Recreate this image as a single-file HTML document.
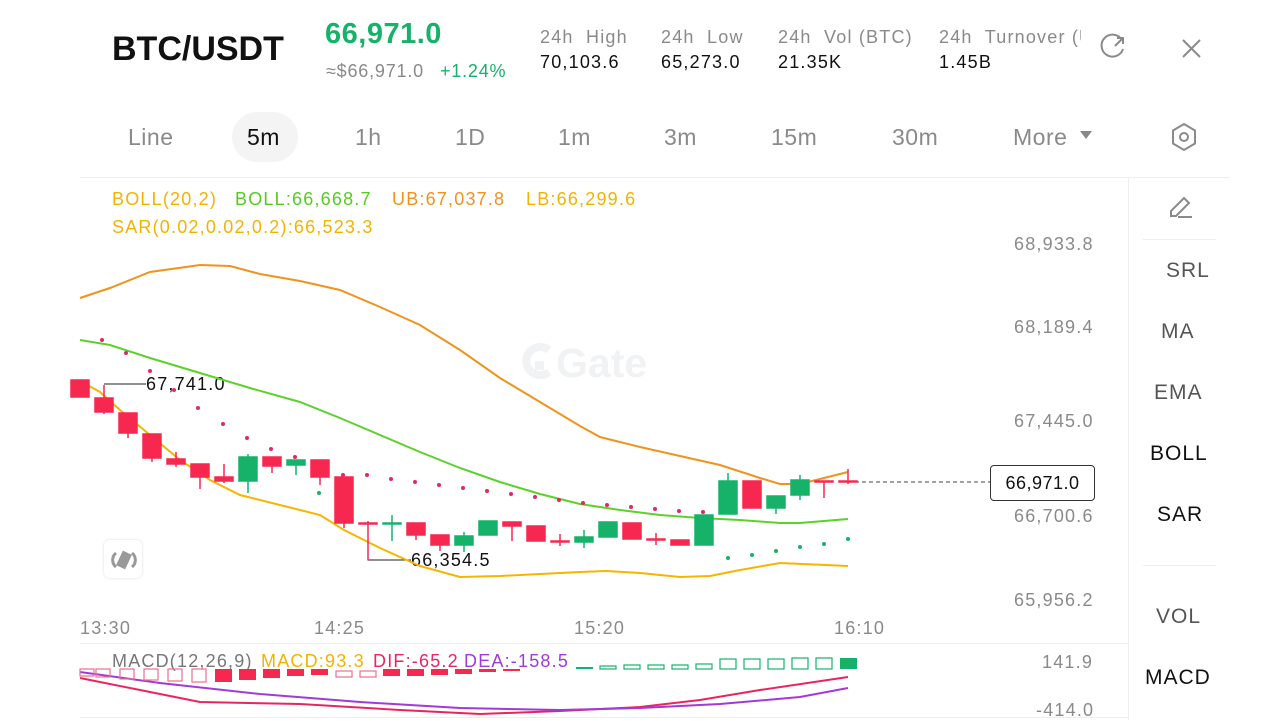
<!DOCTYPE html>
<html><head><meta charset="utf-8"><style>
body{margin:0;width:1280px;height:720px;background:#fff;font-family:"Liberation Sans",sans-serif;position:relative;overflow:hidden}
.a{position:absolute;white-space:nowrap}
.g{color:#8a8a8a}
.s{font-size:18px;letter-spacing:1.2px}
.t{font-size:23px;letter-spacing:0.5px}
.sb{font-size:21px;letter-spacing:1px}
</style></head><body>
<div class="a" style="left:112px;top:30px;font-size:34px;font-weight:bold;color:#111">BTC/USDT</div>
<div class="a" style="left:325px;top:18px;font-size:29px;font-weight:bold;color:#17b26a;letter-spacing:0.5px">66,971.0</div>
<div class="a g" style="left:326px;top:61px;font-size:18px;letter-spacing:0.8px">≈$66,971.0</div>
<div class="a" style="left:440px;top:61px;font-size:18px;letter-spacing:0.8px;color:#17b26a">+1.24%</div>
<div class="a g s" style="left:540px;top:27px">24h&nbsp; High</div>
<div class="a s" style="left:540px;top:52px;color:#111">70,103.6</div>
<div class="a g s" style="left:661px;top:27px">24h&nbsp; Low</div>
<div class="a s" style="left:661px;top:52px;color:#111">65,273.0</div>
<div class="a g s" style="left:778px;top:27px">24h&nbsp; Vol (BTC)</div>
<div class="a s" style="left:778px;top:52px;color:#111">21.35K</div>
<div class="a g s" style="left:939px;top:27px;width:142px;overflow:hidden">24h&nbsp; Turnover (USDT)</div>
<div class="a s" style="left:939px;top:52px;color:#111">1.45B</div>
<div class="a" style="left:232px;top:112px;width:66px;height:50px;border-radius:25px;background:#f4f4f4"></div>
<div class="a g t" style="left:128px;top:124px">Line</div>
<div class="a t" style="left:247px;top:124px;color:#111">5m</div>
<div class="a g t" style="left:355px;top:124px">1h</div>
<div class="a g t" style="left:455px;top:124px">1D</div>
<div class="a g t" style="left:558px;top:124px">1m</div>
<div class="a g t" style="left:664px;top:124px">3m</div>
<div class="a g t" style="left:771px;top:124px">15m</div>
<div class="a g t" style="left:892px;top:124px">30m</div>
<div class="a g t" style="left:1013px;top:124px">More</div>
<div class="a" style="left:80px;top:177px;width:1150px;height:1px;background:#eee"></div>
<div class="a" style="left:1128px;top:177px;width:1px;height:543px;background:#eee"></div>
<div class="a" style="left:1143px;top:239px;width:73px;height:1px;background:#eee"></div>
<div class="a" style="left:1143px;top:565px;width:73px;height:1px;background:#eee"></div>
<div class="a" style="left:80px;top:643px;width:1048px;height:1px;background:#eee"></div>
<div class="a" style="left:80px;top:717px;width:1048px;height:1px;background:#eee"></div>
<div class="a sb" style="left:1166px;top:259px;color:#555">SRL</div>
<div class="a sb" style="left:1161px;top:320px;color:#555">MA</div>
<div class="a sb" style="left:1154px;top:381px;color:#555">EMA</div>
<div class="a sb" style="left:1150px;top:442px;color:#111">BOLL</div>
<div class="a sb" style="left:1157px;top:503px;color:#111">SAR</div>
<div class="a sb" style="left:1156px;top:605px;color:#555">VOL</div>
<div class="a sb" style="left:1145px;top:666px;color:#111">MACD</div>
<div class="a s" style="left:112px;top:189px;color:#f2b300">BOLL(20,2)</div>
<div class="a s" style="left:235px;top:189px;color:#56cc20">BOLL:66,668.7</div>
<div class="a s" style="left:392px;top:189px;color:#f0921e">UB:67,037.8</div>
<div class="a s" style="left:526px;top:189px;color:#f2b300">LB:66,299.6</div>
<div class="a s" style="left:112px;top:217px;color:#f2b300">SAR(0.02,0.02,0.2):66,523.3</div>
<div class="a g s" style="left:1014px;top:234px">68,933.8</div>
<div class="a g s" style="left:1014px;top:317px">68,189.4</div>
<div class="a g s" style="left:1014px;top:411px">67,445.0</div>
<div class="a g s" style="left:1014px;top:506px">66,700.6</div>
<div class="a g s" style="left:1014px;top:590px">65,956.2</div>
<div class="a g s" style="left:80px;top:618px">13:30</div>
<div class="a g s" style="left:314px;top:618px">14:25</div>
<div class="a g s" style="left:574px;top:618px">15:20</div>
<div class="a g s" style="left:834px;top:618px">16:10</div>
<div class="a g s" style="left:1042px;top:652px">141.9</div>
<div class="a g s" style="left:1036px;top:700px">-414.0</div>
<div class="a s" style="left:990px;top:465px;width:103px;height:34px;border:1px solid #333;border-radius:4px;background:#fff;line-height:34px;text-align:center;color:#111;letter-spacing:0.5px">66,971.0</div>
<div class="a s" style="left:146px;top:374px;color:#111">67,741.0</div>
<div class="a s" style="left:411px;top:550px;color:#111">66,354.5</div>
<div class="a s" style="left:112px;top:651px;color:#777">MACD(12,26,9)</div>
<div class="a s" style="left:261px;top:651px;color:#f2b300">MACD:93.3</div>
<div class="a s" style="left:373px;top:651px;color:#e8265e">DIF:-65.2</div>
<div class="a s" style="left:464px;top:651px;color:#a23ad6">DEA:-158.5</div>
<div class="a" style="left:104px;top:540px;width:38px;height:38px;border-radius:6px;background:#fff;box-shadow:0 0 3px #ddd"></div>
<svg class="a" style="left:0;top:0" width="1280" height="720">
<text x="556" y="377" font-family="Liberation Sans" font-weight="bold" font-size="41" fill="#f1f2f3">Gate</text>
<path d="M549 350 A14 14 0 1 0 549 372" fill="none" stroke="#f1f2f3" stroke-width="8"/>
<rect x="535" y="361" width="9" height="9" fill="#f1f2f3"/>
<g fill="none" stroke="#8a8a8a" stroke-width="2">
<path d="M1122 40 A11 11 0 1 0 1123 49"/><path d="M1115 46 L1123 38 M1117 38 H1123 V44"/>
<path d="M1183 40 L1200 57 M1200 40 L1183 57"/>
<path d="M1184 124 L1195 130.5 V143.5 L1184 150 L1173 143.5 V130.5 Z"/><circle cx="1184" cy="137" r="4"/>
<path d="M1171 216 L1171 211 L1184 198 L1189 203 L1176 216 Z M1178 217 H1192"/>
</g>
<path d="M1080 131 H1092 L1086 139 Z" fill="#888"/>
<g fill="none" stroke="#999" stroke-width="3"><path d="M116 553 a9 9 0 0 0 0 14 M132 553 a9 9 0 0 1 0 14"/></g>
<rect x="119" y="552" width="10" height="16" fill="#999" transform="rotate(25 124 560)"/>
<path d="M104 384 H146 M368 524 V560 H411" stroke="#222" fill="none"/>
<path d="M848 482 H990" stroke="#444" stroke-dasharray="4,3"/>
<g fill="none" stroke-width="2">
<polyline stroke="#f0931e" points="80,298 110,288 150,272 200,265 230,266 260,274 300,281 340,290 380,307 420,325 460,350 500,378 540,402 580,426 600,437 640,447 680,456 720,465 760,478 780,484 800,484 848,472"/>
<polyline stroke="#5cd12a" points="80,340 110,345 150,358 200,373 250,388 300,402 340,418 380,435 420,452 460,468 500,482 540,494 580,504 620,510 660,515 700,518 740,520 780,523 800,523 848,519"/>
<polyline stroke="#f7b500" points="80,381 100,392 120,410 150,435 180,460 210,480 240,495 280,505 320,515 344,530 380,548 420,566 460,577 500,576 540,574 580,572 606,571 640,573 680,577 710,576 740,570 780,563 848,566"/>
<polyline stroke="#e8265e" points="80,678 140,690 200,702 300,704 400,710 480,714 560,711 640,707 700,700 760,690 848,677"/>
<polyline stroke="#a23ad6" points="80,672 160,683 260,694 360,702 460,708 560,710 640,708 720,704 800,697 848,688"/>
</g>
<g fill="#e8265e">
<circle cx="102" cy="340" r="2"/><circle cx="126" cy="353" r="2"/><circle cx="150" cy="371" r="2"/><circle cx="174" cy="390" r="2"/><circle cx="198" cy="408" r="2"/><circle cx="223" cy="424" r="2"/><circle cx="247" cy="438" r="2"/><circle cx="271" cy="449" r="2"/><circle cx="295" cy="457" r="2"/><circle cx="343" cy="475" r="2"/><circle cx="367" cy="475" r="2"/><circle cx="391" cy="479" r="2"/><circle cx="415" cy="482" r="2"/><circle cx="439" cy="485" r="2"/><circle cx="463" cy="488" r="2"/><circle cx="487" cy="491" r="2"/><circle cx="511" cy="494" r="2"/><circle cx="535" cy="497" r="2"/><circle cx="559" cy="500" r="2"/><circle cx="583" cy="503" r="2"/><circle cx="607" cy="505" r="2"/><circle cx="631" cy="507" r="2"/><circle cx="655" cy="509" r="2"/><circle cx="679" cy="511" r="2"/><circle cx="703" cy="512" r="2"/>
</g>
<g fill="#17b26a"><circle cx="319" cy="493" r="2"/><circle cx="728" cy="558" r="2"/><circle cx="752" cy="555" r="2"/><circle cx="776" cy="551" r="2"/><circle cx="800" cy="547" r="2"/><circle cx="824" cy="544" r="2"/><circle cx="848" cy="539" r="2"/></g>
<g stroke-width="1.5">
<g fill="#f6284f" stroke="#f6284f">
<rect x="71" y="380" width="18" height="17"/>
<line x1="104" y1="385" x2="104" y2="414"/><rect x="95" y="398" width="18" height="14"/>
<line x1="128" y1="413" x2="128" y2="438"/><rect x="119" y="413" width="18" height="20"/>
<line x1="152" y1="434" x2="152" y2="462"/><rect x="143" y="434" width="18" height="24"/>
<line x1="176" y1="452" x2="176" y2="467"/><rect x="167" y="459" width="18" height="5"/>
<line x1="200" y1="464" x2="200" y2="489"/><rect x="191" y="464" width="18" height="13"/>
<line x1="224" y1="464" x2="224" y2="483"/><rect x="215" y="477" width="18" height="4"/>
<line x1="272" y1="457" x2="272" y2="473"/><rect x="263" y="457" width="18" height="9"/>
<line x1="320" y1="460" x2="320" y2="485"/><rect x="311" y="460" width="18" height="17"/>
<line x1="344" y1="477" x2="344" y2="528"/><rect x="335" y="477" width="18" height="46"/>
<line x1="368" y1="521" x2="368" y2="560"/><rect x="359" y="523" width="18" height="1"/>
<line x1="416" y1="523" x2="416" y2="540"/><rect x="407" y="523" width="18" height="12"/>
<line x1="440" y1="535" x2="440" y2="551"/><rect x="431" y="535" width="18" height="10"/>
<line x1="512" y1="522" x2="512" y2="541"/><rect x="503" y="522" width="18" height="4"/>
<rect x="527" y="526" width="18" height="15"/>
<line x1="560" y1="534" x2="560" y2="546"/><rect x="551" y="541" width="18" height="1"/>
<rect x="623" y="523" width="18" height="16"/>
<line x1="656" y1="533" x2="656" y2="545"/><rect x="647" y="539" width="18" height="1"/>
<rect x="671" y="540" width="18" height="5"/>
<rect x="743" y="481" width="18" height="27"/>
<line x1="824" y1="481" x2="824" y2="498"/><rect x="815" y="481" width="18" height="1"/>
<line x1="848" y1="469" x2="848" y2="484"/><rect x="839" y="481" width="18" height="1"/>
</g>
<g fill="#17b26a" stroke="#17b26a">
<line x1="248" y1="454" x2="248" y2="493"/><rect x="239" y="457" width="18" height="24"/>
<line x1="296" y1="460" x2="296" y2="475"/><rect x="287" y="460" width="18" height="5"/>
<line x1="392" y1="515" x2="392" y2="541"/><rect x="383" y="523" width="18" height="1"/>
<line x1="464" y1="532" x2="464" y2="552"/><rect x="455" y="536" width="18" height="9"/>
<rect x="479" y="521" width="18" height="14"/>
<line x1="584" y1="530" x2="584" y2="548"/><rect x="575" y="537" width="18" height="5"/>
<rect x="599" y="522" width="18" height="15"/>
<rect x="695" y="515" width="18" height="30"/>
<line x1="728" y1="473" x2="728" y2="514"/><rect x="719" y="481" width="18" height="33"/>
<line x1="776" y1="496" x2="776" y2="514"/><rect x="767" y="496" width="18" height="12"/>
<line x1="800" y1="475" x2="800" y2="500"/><rect x="791" y="480" width="18" height="15"/>
</g>
</g>
<g stroke-width="1.2">
<g fill="none" stroke="#ef6f8c">
<rect x="80" y="669" width="14" height="7"/><rect x="96" y="669" width="14" height="8"/><rect x="120" y="669" width="14" height="10"/><rect x="144" y="669" width="14" height="11"/><rect x="168" y="669" width="14" height="12"/><rect x="192" y="669" width="14" height="13"/>
<rect x="336" y="671" width="16" height="6"/><rect x="360" y="671" width="16" height="6"/>
</g>
<g fill="#f6284f">
<rect x="215" y="669" width="17" height="13"/><rect x="239" y="669" width="17" height="11"/><rect x="263" y="669" width="17" height="9"/><rect x="287" y="669" width="17" height="7"/><rect x="311" y="669" width="17" height="6"/>
<rect x="383" y="669" width="17" height="7"/><rect x="407" y="669" width="17" height="7"/><rect x="431" y="669" width="17" height="6"/><rect x="455" y="669" width="17" height="5"/><rect x="479" y="669" width="17" height="3"/><rect x="503" y="669" width="17" height="2"/>
</g>
<g fill="none" stroke="#17b26a">
<rect x="600" y="666" width="16" height="3"/><rect x="624" y="665" width="16" height="4"/><rect x="648" y="665" width="16" height="4"/><rect x="672" y="665" width="16" height="4"/><rect x="696" y="664" width="16" height="5"/><rect x="720" y="659" width="16" height="10"/><rect x="744" y="659" width="16" height="10"/><rect x="768" y="659" width="16" height="10"/><rect x="792" y="658" width="16" height="11"/><rect x="816" y="658" width="16" height="11"/>
</g>
<rect x="576" y="667" width="17" height="2" fill="#17b26a"/>
<rect x="840" y="658" width="17" height="11" fill="#17b26a"/>
</g>
</svg>
</body></html>
